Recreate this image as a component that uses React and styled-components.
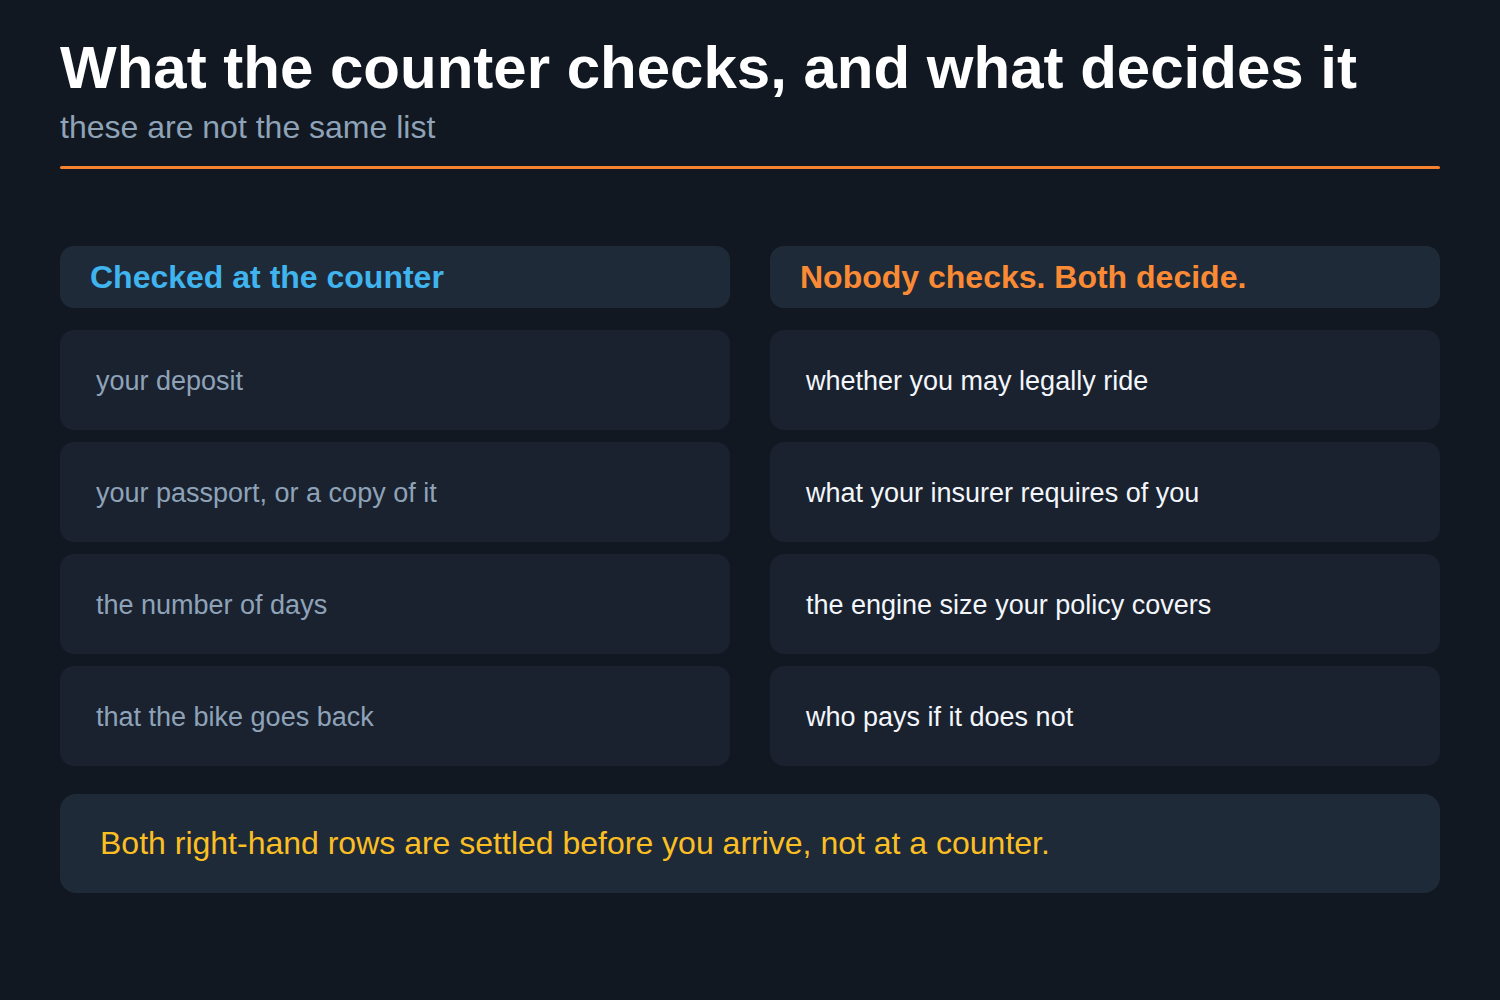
import React from "react";
import styled, { createGlobalStyle } from "styled-components";

const Global = createGlobalStyle`
  html, body { margin: 0; padding: 0; background: #111821; }
  body { font-family: "Liberation Sans", Arial, sans-serif; }
`;

const Page = styled.div`
  width: 1500px;
  height: 1000px;
  box-sizing: border-box;
  padding: 34px 60px 0;
  background: #111821;
  display: flex;
  flex-direction: column;
`;

const Title = styled.h1`
  margin: 0;
  font-size: 60px;
  font-weight: 700;
  line-height: 67px;
  color: #ffffff;
`;

const Subtitle = styled.p`
  margin: 8px 0 0;
  font-size: 32px;
  line-height: 36px;
  color: #8fa3b8;
`;

const Rule = styled.div`
  margin-top: 21px;
  height: 3px;
  border-radius: 2px;
  background: #f5822e;
`;

const Columns = styled.div`
  margin-top: 77px;
  display: grid;
  grid-template-columns: 1fr 1fr;
  column-gap: 40px;
`;

const Column = styled.div`
  display: flex;
  flex-direction: column;
  gap: 12px;
`;

const Header = styled.div`
  height: 62px;
  box-sizing: border-box;
  padding: 0 30px;
  margin-bottom: 10px;
  border-radius: 14px;
  background: #1f2a38;
  display: flex;
  align-items: center;
  font-size: 32px;
  font-weight: 700;
  color: ${(p) => p.$color};
`;

const Row = styled.div`
  height: 100px;
  box-sizing: border-box;
  padding: 3px 36px 0;
  border-radius: 14px;
  background: #1a2230;
  display: flex;
  align-items: center;
  font-size: 27px;
  color: ${(p) => (p.$strong ? "#f3f6fa" : "#8fa3b8")};
`;

const Note = styled.div`
  margin-top: 28px;
  height: 99px;
  box-sizing: border-box;
  padding: 0 40px 1px;
  border-radius: 16px;
  background: #1f2a38;
  display: flex;
  align-items: center;
  font-size: 32px;
  color: #fbbf24;
`;

const left = [
  "your deposit",
  "your passport, or a copy of it",
  "the number of days",
  "that the bike goes back",
];
const right = [
  "whether you may legally ride",
  "what your insurer requires of you",
  "the engine size your policy covers",
  "who pays if it does not",
];

export default function App() {
  return (
    <>
      <Global />
      <Page>
        <Title>What the counter checks, and what decides it</Title>
        <Subtitle>these are not the same list</Subtitle>
        <Rule />
        <Columns>
          <Column>
            <Header $color="#3fb4ee">Checked at the counter</Header>
            {left.map((t) => (
              <Row key={t}>{t}</Row>
            ))}
          </Column>
          <Column>
            <Header $color="#fb8a35">Nobody checks. Both decide.</Header>
            {right.map((t) => (
              <Row key={t} $strong>
                {t}
              </Row>
            ))}
          </Column>
        </Columns>
        <Note>Both right-hand rows are settled before you arrive, not at a counter.</Note>
      </Page>
    </>
  );
}
